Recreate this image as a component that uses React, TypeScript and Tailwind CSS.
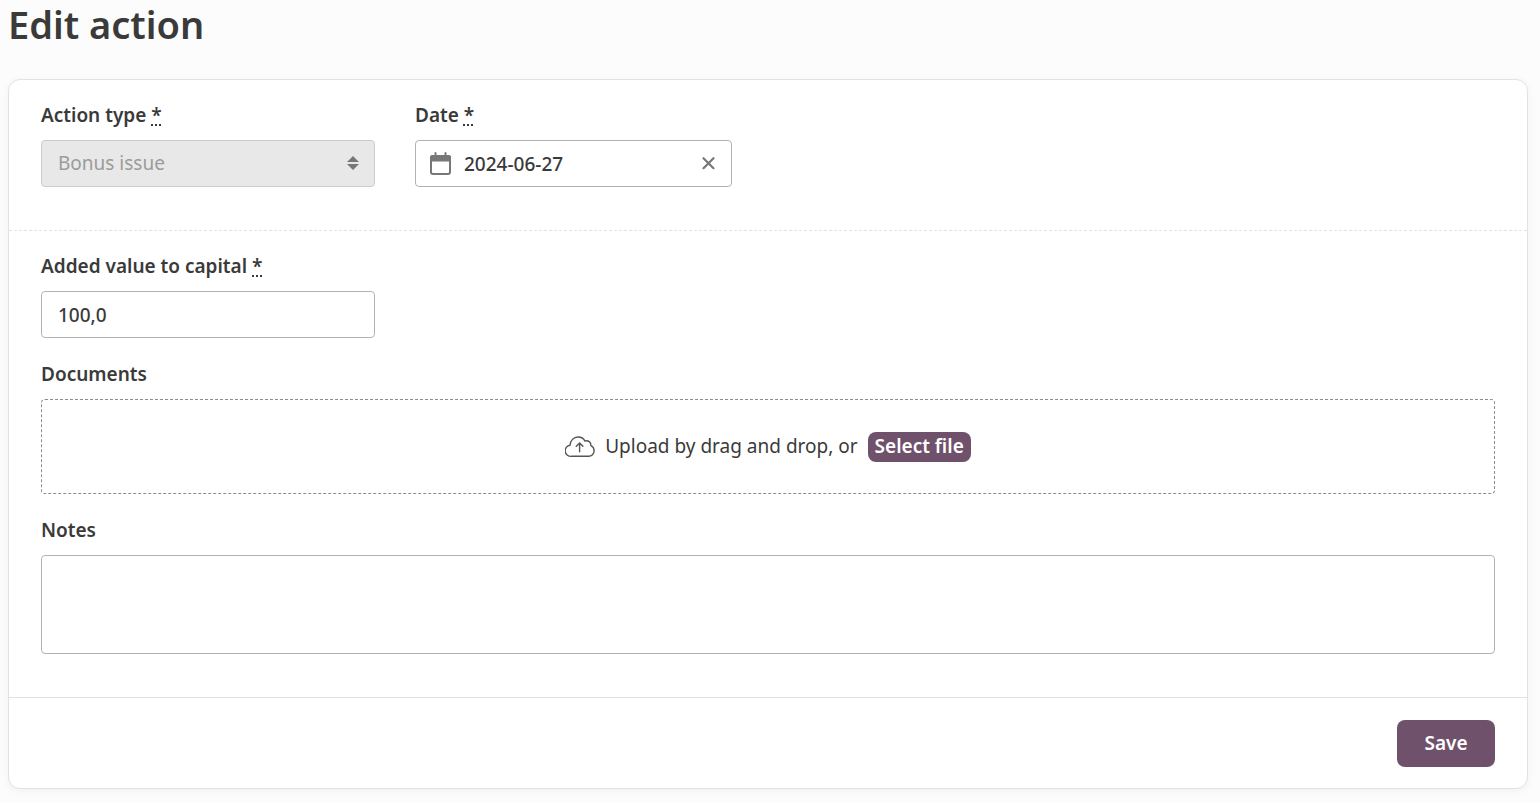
import { useState, type ReactNode } from "react";

const fieldBox =
  "h-[47px] w-full rounded border border-[#b3b3b3] bg-white text-[19px] font-medium text-[#3a3a3a] outline-none focus:border-[#70516b]";

function Required() {
  return (
    <abbr title="required" className="underline decoration-dotted decoration-2 underline-offset-2">
      *
    </abbr>
  );
}

function Field({
  id,
  label,
  required,
  className,
  children,
}: {
  id: string;
  label: string;
  required?: boolean;
  className?: string;
  children: ReactNode;
}) {
  return (
    <div className={className}>
      <label htmlFor={id} className="mb-3 block text-[19px] leading-[26px] font-semibold">
        {label} {required && <Required />}
      </label>
      {children}
    </div>
  );
}

function CalendarIcon() {
  return (
    <svg viewBox="0 0 22 24" className="h-6 w-[22px]" fill="none" aria-hidden="true">
      <path d="M6.500 1v4M16.500 1v4" stroke="#777" strokeWidth="2" strokeLinecap="round" />
      <rect x="2" y="4" width="19" height="18" rx="2" stroke="#777" strokeWidth="2" />
      <path d="M1 9.500V5.500a2.500 2.500 0 0 1 2.500-2.500h16a2.500 2.500 0 0 1 2.500 2.500v4z" fill="#777" />
    </svg>
  );
}

function CloudUploadIcon() {
  return (
    <svg
      viewBox="0 0 30 22"
      className="h-[22px] w-[30px]"
      fill="none"
      stroke="#555"
      strokeWidth="1.4"
      strokeLinecap="round"
      strokeLinejoin="round"
      aria-hidden="true"
    >
      <path d="M6.6 20.3A5.600 5.600 0 0 1 5 9.2C5.200 4.600 8.700 1 13 1c3.200 0 5.700 1.500 7 4.100 3.200-1.100 6.200 1.100 5.900 4.600 2 1 3.200 2.900 3.200 5.100 0 3.100-2.400 5.500-5.500 5.500z" />
      <path d="M14.600 15.800V7M11.300 10.200 14.600 6.900l3.300 3.300" />
    </svg>
  );
}

export default function App() {
  const [date, setDate] = useState("2024-06-27");

  return (
    <main className="min-h-screen bg-[#fcfcfc] pr-3 pb-3 pl-2 font-['Noto_Sans',sans-serif] text-[#3a3a3a]">
      <h1 className="text-[38px] leading-[49px] font-semibold">Edit action</h1>

      <form
        className="mt-[30px] rounded-xl border border-[#e2e2e2] bg-white shadow-[0_2px_10px_rgba(0,0,0,0.05)]"
        onSubmit={(e) => e.preventDefault()}
      >
        <div className="flex flex-wrap gap-10 border-b border-dashed border-[#e4e4e4] px-8 pt-[22px] pb-[43px]">
          <Field id="action-type" label="Action type" required className="w-[334px]">
            <div className="relative">
              <select
                id="action-type"
                disabled
                className="h-[47px] w-full appearance-none rounded border border-[#cccccc] bg-[#e8e8e8] px-4 text-[19px] text-[#9b9b9b] opacity-100"
              >
                <option>Bonus issue</option>
              </select>
              <svg
                viewBox="0 0 12 14"
                className="pointer-events-none absolute top-4 right-4 h-3.5 w-3"
                fill="#777"
                aria-hidden="true"
              >
                <path d="M6 0l6 6h-12zM6 14l6-6h-12z" />
              </svg>
            </div>
          </Field>

          <Field id="date" label="Date" required className="w-[317px]">
            <div className="relative">
              <span className="pointer-events-none absolute inset-y-0 left-3.5 flex items-center">
                <CalendarIcon />
              </span>
              <input
                id="date"
                type="text"
                value={date}
                onChange={(e) => setDate(e.target.value)}
                className={`${fieldBox} pr-12 pl-12`}
              />
              <button
                type="button"
                aria-label="Clear date"
                onClick={() => setDate("")}
                className="absolute inset-y-0 right-4 flex items-center"
              >
                <svg viewBox="0 0 14 14" className="size-3.5" stroke="#777" strokeWidth="2.2" strokeLinecap="round" aria-hidden="true">
                  <path d="M1.500 1.200l10 10M11.500 1.200l-10 10" />
                </svg>
              </button>
            </div>
          </Field>
        </div>

        <div className="flex flex-col gap-[23px] border-b border-[#e2e2e2] px-8 pt-[22px] pb-[43px]">
          <Field id="added-value" label="Added value to capital" required className="w-[334px]">
            <input id="added-value" type="text" defaultValue="100,0" className={`${fieldBox} px-4`} />
          </Field>

          <Field id="documents" label="Documents">
            <div className="flex h-[95px] items-center justify-center rounded border border-dashed border-[#8c8c8c]">
              <CloudUploadIcon />
              <span className="ml-2.5 text-[19px]">Upload by drag and drop, or</span>
              <button
                id="documents"
                type="button"
                className="ml-2.5 h-[30px] rounded-lg bg-[#70516b] px-[7px] text-[19px] font-semibold text-white"
              >
                Select file
              </button>
            </div>
          </Field>

          <Field id="notes" label="Notes">
            <textarea
              id="notes"
              className="block h-[99px] w-full resize-none rounded border border-[#b3b3b3] bg-white px-4 py-2.5 text-[19px] outline-none focus:border-[#70516b]"
            />
          </Field>
        </div>

        <div className="flex justify-end px-8 pt-[22px] pb-[21px]">
          <button
            type="submit"
            className="h-[47px] w-[98px] rounded-lg bg-[#70516b] text-[19px] font-semibold text-white"
          >
            Save
          </button>
        </div>
      </form>
    </main>
  );
}
